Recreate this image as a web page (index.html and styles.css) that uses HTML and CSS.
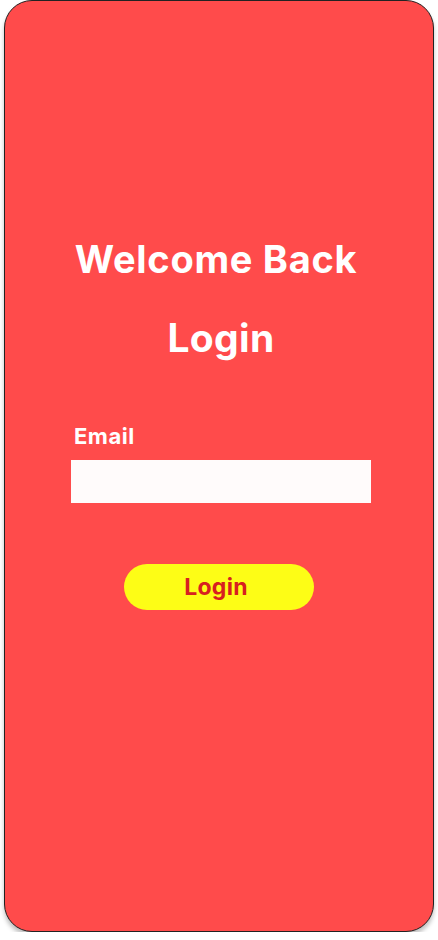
FILE: index.html
```html
<!DOCTYPE html>
<html>
<head>
<meta charset="utf-8">
<link rel="stylesheet" href="styles.css">
</head>
<body>
<div class="phone">
  <h1 class="welcome">Welcome Back</h1>
  <h2 class="title">Login</h2>
  <form class="form">
    <label class="label" for="email">Email</label>
    <input class="input" id="email" type="email">
    <button class="btn" type="button">Login</button>
  </form>
</div>
</body>
</html>
```
FILE: styles.css
```css
html, body {
  margin: 0;
  padding: 0;
  background: #ffffff;
}
body {
  font-family: Inter, "Liberation Sans", sans-serif;
}
.phone {
  box-sizing: border-box;
  margin-left: 4px;
  width: 430px;
  height: 932px;
  background: #ff4b4b;
  border: 1px solid #222;
  border-radius: 28px;
  box-shadow: 0 4px 4px rgba(0,0,0,0.25);
  display: flex;
  flex-direction: column;
  align-items: center;
  padding-top: 233px;
}
.welcome {
  margin: 0 0 0 -6px;
  color: #fff;
  font-size: 38px;
  font-weight: 700;
  letter-spacing: 0.7px;
  line-height: 50px;
}
.title {
  margin: 29px 0 0 4px;
  color: #fff;
  font-size: 39px;
  font-weight: 700;
  letter-spacing: 0.3px;
  line-height: 50px;
}
.form {
  margin-top: 58px;
  margin-left: 4px;
  width: 300px;
  display: flex;
  flex-direction: column;
}
.label {
  color: #fff;
  font-size: 22px;
  font-weight: 700;
  letter-spacing: 0.5px;
  padding-left: 3px;
  line-height: 30px;
}
.input {
  margin-top: 9px;
  box-sizing: border-box;
  height: 43px;
  width: 300px;
  border: none;
  background: #fffbfb;
  outline: none;
}
.btn {
  margin-top: 61px;
  margin-left: -4px;
  align-self: center;
  width: 190px;
  height: 46px;
  border: none;
  border-radius: 23px;
  background: #fdfd16;
  color: #d72020;
  font-family: Inter, "Liberation Sans", sans-serif;
  font-size: 23px;
  font-weight: 700;
  letter-spacing: 0.3px;
  padding: 0 6px 0 0;
}
```
